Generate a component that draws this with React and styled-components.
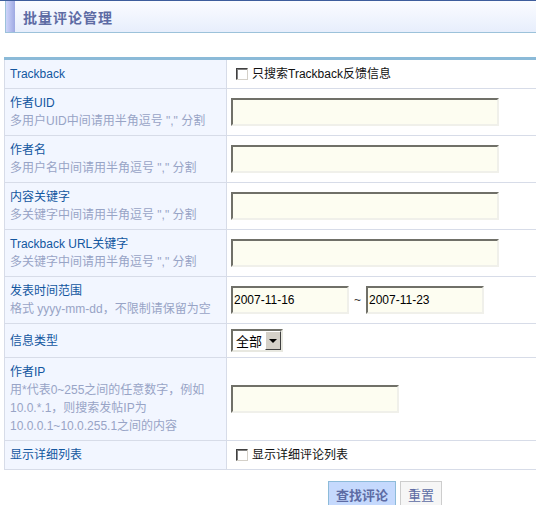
import React from 'react'
import styled, { createGlobalStyle } from 'styled-components'

const GlobalStyle = createGlobalStyle`
  html, body {
    margin: 0;
    padding: 0;
    background: #fff;
  }
  body {
    border-top: 1px solid #3e5d9c;
    font-family: "Liberation Sans", "Noto Sans CJK SC", sans-serif;
    font-size: 12px;
    overflow: hidden;
  }
`

const Page = styled.div`
  width: 536px;
  overflow: hidden;
`

const Header = styled.div`
  display: flex;
  align-items: center;
  height: 31px;
  margin-left: 5px;
  border-left: 1px solid #9cc2da;
  border-bottom: 1px solid #9cc2da;
  background: linear-gradient(to bottom, #fbfcff, #e7eefc);
`

const Accent = styled.div`
  align-self: stretch;
  width: 9px;
  background: linear-gradient(to right, #cdd4fa, #9ea9e2);
`

const Title = styled.h1`
  margin: 0 0 0 8px;
  font-family: "Noto Sans CJK SC", sans-serif;
  font-size: 14px;
  font-weight: bold;
  letter-spacing: 1px;
  color: #5d6ba4;
  line-height: 1;
`

const Table = styled.table`
  margin: 24px 0 0 4px;
  width: 700px;
  border-collapse: collapse;
  border-top: 3px solid #8bbad8;
`

const Row = styled.tr`
  border-bottom: 1px solid #d7dce8;
`

const Label = styled.th`
  width: 211px;
  padding: 5px;
  text-align: left;
  vertical-align: middle;
  font-weight: normal;
  background: #f2f6ff;
  border-left: 1px solid #d7dce8;
  border-right: 1px solid #d7dce8;
  line-height: 18px;
`

const Name = styled.div`
  color: #13579f;
`

const Hint = styled.div`
  color: #98a4c6;
`

const Field = styled.td`
  padding: 5px 4px;
  vertical-align: middle;
  line-height: 18px;
`

const Input = styled.input`
  box-sizing: border-box;
  width: ${p => p.$w || 268}px;
  height: 28px;
  margin: 0;
  padding: 0 0 0 1px;
  border-style: solid;
  border-width: 2px;
  border-color: #707068 #f0f0ea #f0f0ea #707068;
  background: #fdfdf1;
  font-family: "Liberation Sans", sans-serif;
  font-size: 12px;
  color: #000;
  outline: none;
`

const DateRange = styled.div`
  display: flex;
  align-items: center;
  gap: 5px;
  color: #333;
`

const Check = styled.label`
  display: flex;
  align-items: center;
  gap: 4px;
  padding-left: 5px;
  color: #111;
`

const Box = styled.span`
  box-sizing: border-box;
  width: 12px;
  height: 12px;
  border-style: solid;
  border-width: 1px;
  border-color: #404040 #d4d0c8 #d4d0c8 #404040;
  box-shadow: inset 1px 1px 0 #808080;
  background: #fff;
`

const Select = styled.div`
  box-sizing: border-box;
  display: flex;
  align-items: center;
  justify-content: space-between;
  width: 52px;
  height: 23px;
  border-style: solid;
  border-width: 2px;
  border-color: #707068 #e8e8e0 #e8e8e0 #707068;
  background: #fff;
  padding-left: 3px;
  font-family: "Noto Sans CJK SC", sans-serif;
  font-size: 13px;
  color: #000;
`

const Arrow = styled.span`
  box-sizing: border-box;
  display: flex;
  align-items: center;
  justify-content: center;
  width: 16px;
  height: 19px;
  background: #d4d0c8;
  border-style: solid;
  border-width: 1px;
  border-color: #fff #404040 #404040 #fff;

  &::after {
    content: '';
    border-left: 4px solid transparent;
    border-right: 4px solid transparent;
    border-top: 4px solid #000;
  }
`

const Actions = styled.div`
  display: flex;
  gap: 4px;
  margin: 11px 0 0 328px;
`

const Button = styled.button`
  box-sizing: border-box;
  height: 26px;
  padding: 0 7px;
  border: 1px solid ${p => (p.$primary ? '#8dbbd9' : '#cdcdcd')};
  background: ${p => (p.$primary ? '#c5d9fd' : '#f6f6f6')};
  font-family: "Noto Sans CJK SC", sans-serif;
  font-size: 13px;
  font-weight: ${p => (p.$primary ? 'bold' : 'normal')};
  color: #5d6ba4;
`

const rows = [
  { name: '作者UID', hint: '多用户UID中间请用半角逗号 "," 分割' },
  { name: '作者名', hint: '多用户名中间请用半角逗号 "," 分割' },
  { name: '内容关键字', hint: '多关键字中间请用半角逗号 "," 分割' },
  { name: 'Trackback URL关键字', hint: '多关键字中间请用半角逗号 "," 分割' },
]

export default function App() {
  return (
    <Page>
      <GlobalStyle />
      <Header>
        <Accent />
        <Title>批量评论管理</Title>
      </Header>

      <Table>
        <tbody>
          <Row>
            <Label><Name>Trackback</Name></Label>
            <Field>
              <Check><Box />只搜索Trackback反馈信息</Check>
            </Field>
          </Row>
          {rows.map(r => (
            <Row key={r.name}>
              <Label>
                <Name>{r.name}</Name>
                <Hint>{r.hint}</Hint>
              </Label>
              <Field><Input /></Field>
            </Row>
          ))}
          <Row>
            <Label>
              <Name>发表时间范围</Name>
              <Hint>格式 yyyy-mm-dd，不限制请保留为空</Hint>
            </Label>
            <Field>
              <DateRange>
                <Input $w={118} defaultValue="2007-11-16" />
                ~
                <Input $w={118} defaultValue="2007-11-23" />
              </DateRange>
            </Field>
          </Row>
          <Row>
            <Label><Name>信息类型</Name></Label>
            <Field>
              <Select>全部<Arrow /></Select>
            </Field>
          </Row>
          <Row>
            <Label>
              <Name>作者IP</Name>
              <Hint>用*代表0~255之间的任意数字，例如<br />10.0.*.1，则搜索发帖IP为<br />10.0.0.1~10.0.255.1之间的内容</Hint>
            </Label>
            <Field><Input $w={168} /></Field>
          </Row>
          <Row>
            <Label><Name>显示详细列表</Name></Label>
            <Field>
              <Check><Box />显示详细评论列表</Check>
            </Field>
          </Row>
        </tbody>
      </Table>

      <Actions>
        <Button $primary>查找评论</Button>
        <Button>重置</Button>
      </Actions>
    </Page>
  )
}
